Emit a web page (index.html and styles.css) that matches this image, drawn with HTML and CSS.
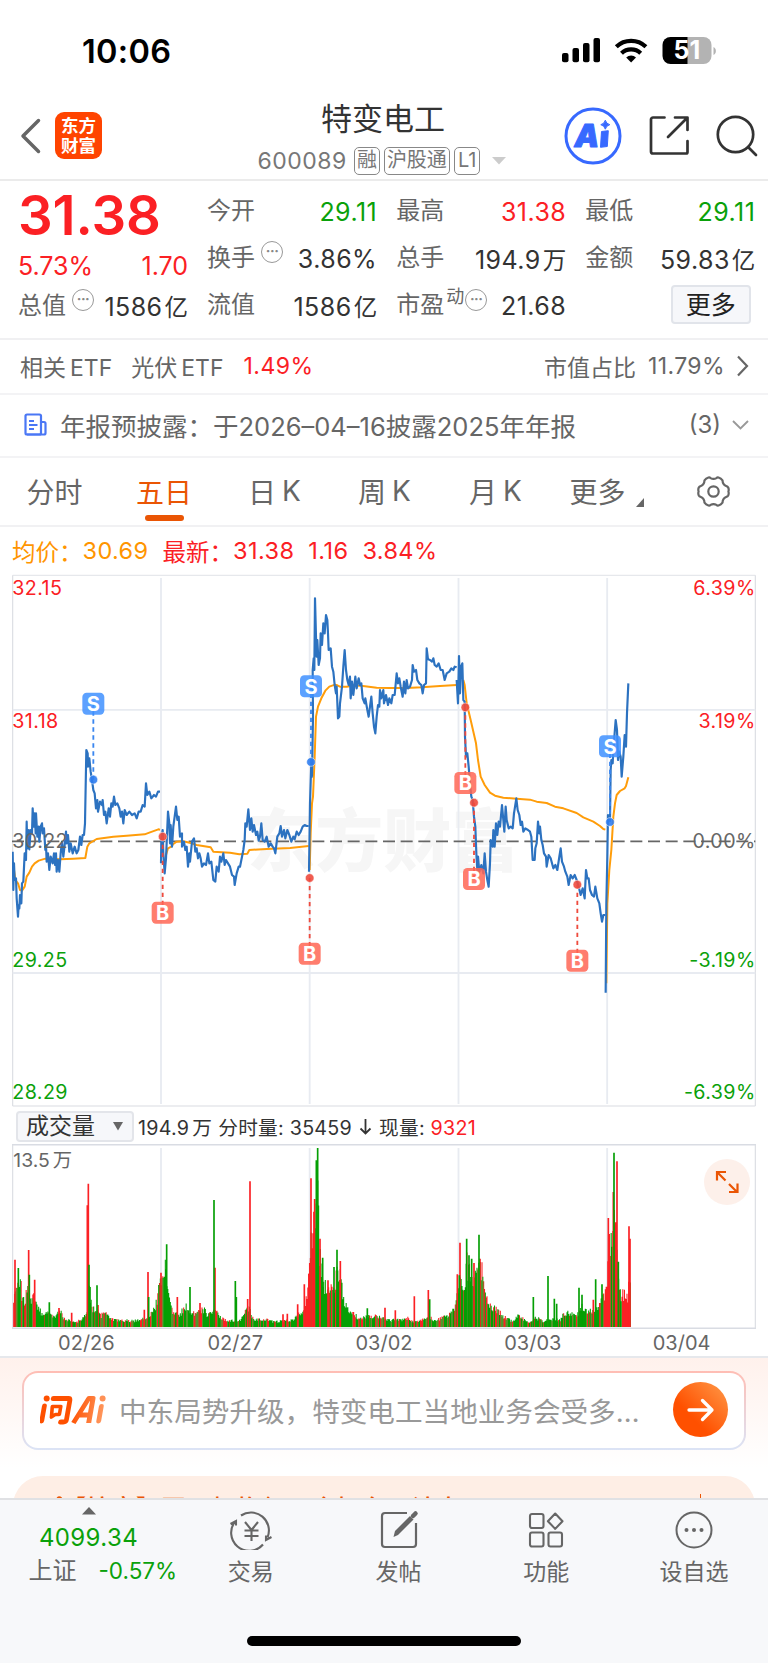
FILE: index.html
```html
<!DOCTYPE html>
<html lang="zh-CN">
<head>
    <meta charset="UTF-8">
    <meta name="viewport" content="width=device-width, initial-scale=1.0">
    <title>特变电工 600089</title>
    <link rel="stylesheet" href="styles.css">
</head>
<body>
<div class="app">

    <div class="status-bar">
        <span class="clock">10:06</span>
        <svg class="signal" width="156" height="28" viewBox="0 0 156 28">
            <rect x="0" y="16" width="6.5" height="9.3" rx="2"/>
            <rect x="10.500" y="11" width="6.5" height="14.3" rx="2"/>
            <rect x="21" y="6" width="6.5" height="19.3" rx="2"/>
            <rect x="31.500" y="1" width="6.5" height="24.3" rx="2"/>
            <g fill="none" stroke="#000" stroke-width="4.2">
                <path d="M54.300 9.700a21.500 21.500 0 0 1 29.600 0"/>
                <path d="M59.500 16.200a13.800 13.800 0 0 1 19.200 0"/>
            </g>
            <path d="M69.100 25.500l-4.900-5a7 7 0 0 1 9.800 0z"/>
            <path d="M108.500 0H127v27h-18.500a8 8 0 0 1-8-8V8a8 8 0 0 1 8-8z"/>
            <path d="M125.500 0h16a8 8 0 0 1 8 8v11a8 8 0 0 1-8 8h-16z" fill="#b3b3b3"/>
            <path d="M151.500 10v8c3.200-1.500 3.200-6.500 0-8z" fill="#b3b3b3"/>
            <text x="125" y="22" class="battery">51</text>
        </svg>
    </div>

    <div class="header">
        <div class="header-left">
            <svg width="22" height="36" viewBox="0 0 22 36"><path d="M19.500 2.500L4 18l15.500 15.500" fill="none" stroke="#666" stroke-width="3.500" stroke-linecap="round" stroke-linejoin="round"/></svg>
            <div class="logo">东方<br>财富</div>
        </div>
        <div class="header-title">
            <h1>特变电工</h1>
            <div class="code">
                <span class="num">600089</span>
                <span class="tag">融</span><span class="tag">沪股通</span><span class="tag">L1</span>
                <svg width="14" height="8" viewBox="0 0 14 8"><path d="M0 0h14L7 7.500z" fill="#ccc"/></svg>
            </div>
        </div>
        <div class="header-right">
            <svg width="58" height="58" viewBox="0 0 58 58">
                <circle cx="29" cy="29" r="27" fill="none" stroke="#3769ff" stroke-width="3"/>
                <g fill="#3769ff" stroke="#3769ff" stroke-linejoin="round">
                    <text x="10.500" y="40" class="ai-text">A</text>
                    <path d="M37.500 24.500l6.800-.8-1 15.800-6.800.8z"/>
                    <path d="M41.300 13.200q.9 3.600 4.500 4.500-3.600.9-4.500 4.500-.9-3.600-4.500-4.500 3.600-.9 4.500-4.500z"/>
                </g>
            </svg>
            <svg width="40" height="41" viewBox="0 0 40 41" fill="none" stroke="#333" stroke-width="2.700" stroke-linecap="round" stroke-linejoin="round">
                <path d="M15.500 2.500H4a2 2 0 0 0-2 2v32a2 2 0 0 0 2 2h33a1.500 1.500 0 0 0 1.500-1.500V26M26 2.500h12.500V15M38 3L19 22"/>
            </svg>
            <svg width="42" height="42" viewBox="0 0 42 42" fill="none" stroke="#333" stroke-width="2.700" stroke-linecap="round">
                <circle cx="19.500" cy="19.500" r="17.700"/>
                <path d="M32.300 32.300l7.700 7.700"/>
            </svg>
        </div>
    </div>

    <div class="quote">
        <div class="quote-col first">
            <div class="price">31.38</div>
            <div class="cell change red"><span class="num">5.73%</span><span class="num">1.70</span></div>
            <div class="cell cap"><label>总值<i class="more-dot">···</i></label><span>1586<b>亿</b></span></div>
        </div>
        <div class="quote-col">
            <div class="cell"><label>今开</label><span class="green">29.11</span></div>
            <div class="cell"><label>换手<i class="more-dot">···</i></label><span>3.86%</span></div>
            <div class="cell"><label>流值</label><span>1586<b>亿</b></span></div>
        </div>
        <div class="quote-col">
            <div class="cell"><label>最高</label><span class="red">31.38</span></div>
            <div class="cell"><label>总手</label><span>194.9<b>万</b></span></div>
            <div class="cell"><label>市盈<sup>动</sup><i class="more-dot tight">···</i></label><span>21.68</span></div>
        </div>
        <div class="quote-col">
            <div class="cell"><label>最低</label><span class="green">29.11</span></div>
            <div class="cell"><label>金额</label><span>59.83<b>亿</b></span></div>
            <div class="cell end"><button class="btn-more">更多</button></div>
        </div>
    </div>

    <div class="row etf">
        <span>相关<em>ETF</em></span>
        <span class="etf-name">光伏<em>ETF</em></span>
        <span class="red rate">1.49%</span>
        <span class="push">市值占比</span>
        <span class="ratio">11.79%</span>
        <svg width="14" height="22" viewBox="0 0 14 22"><path d="M3 1.500l9 9.500-9 9.500" fill="none" stroke="#666" stroke-width="2.200"/></svg>
    </div>

    <div class="row notice">
        <svg width="23" height="23" viewBox="0 0 23 23" fill="none" stroke="#4a77f5" stroke-width="2.200">
            <rect x="1.500" y="1.500" width="15.500" height="20" rx="1.500"/>
            <path d="M17 9h3a1.500 1.500 0 0 1 1.500 1.500V20a1.500 1.500 0 0 1-1.500 1.500H3M5 8h5M5 12h8.500M5 16h5"/>
        </svg>
        <span class="notice-text">年报预披露：于2026–04–16披露2025年年报</span>
        <span class="push">(3)</span>
        <svg width="17" height="10" viewBox="0 0 17 10"><path d="M1 1l7.500 7.500L16 1" fill="none" stroke="#999" stroke-width="1.900"/></svg>
    </div>

    <div class="tabs">
        <div class="tab">分时</div>
        <div class="tab active">五日</div>
        <div class="tab">日<em>K</em></div>
        <div class="tab">周<em>K</em></div>
        <div class="tab">月<em>K</em></div>
        <div class="tab">更多<svg width="8" height="9" viewBox="0 0 8 9"><path d="M8 0v9H0z" fill="#666"/></svg></div>
        <div class="tab gear">
            <svg width="33" height="31" viewBox="0 0 33 31" fill="none" stroke="#666" stroke-width="2.200">
                <path d="M11.500 1.500q1.200-.3 2 .6 3 1.600 6 0 .8-.9 2-.6 2.600.9 4 2.800.2 4.400 3.600 5.700 1.600.6 2.100 1.500.9 2 .2 4 .7 2-.2 4-.5.900-2.100 1.500-3.400 1.300-3.600 5.700-1.400 1.900-4 2.800-1.200.3-2-.6-3-1.600-6 0-.8.9-2 .6-2.600-.9-4-2.800-.2-4.400-3.600-5.700-1.600-.6-2.100-1.500-.9-2-.2-4-.7-2 .2-4 .5-.9 2.100-1.500 3.400-1.300 3.600-5.700 1.400-1.900 4-2.800z" stroke-linejoin="round"/>
                <circle cx="16.500" cy="15.500" r="5.200"/>
            </svg>
        </div>
    </div>

    <div class="legend">
        <span class="orange">均价：</span><span class="orange num">30.69</span>
        <span class="red latest">最新：</span><span class="red num">31.38</span><span class="red num">1.16</span><span class="red num">3.84%</span>
    </div>

    <!-- 五日分时走势 -->
    <svg class="chart" width="744" height="533" viewBox="36 12 2232 1599">
        <text x="742" y="888" class="watermark">东方财富</text>
        <g fill="none" stroke="#e8ebf1">
            <path d="M38 16H2266M38 1608H2266" stroke-width="4" stroke="#e6e8ec"/>
            <path d="M38 16V1608M2266 16V1608" stroke-width="3.500" stroke="#dcdee3"/>
            <path d="M483 24V1602M929 24V1602M1375.500 24V1602M1821.500 24V1602M38 419.500H2266M38 1209H2266" stroke-width="5.500"/>
        </g>
        <path d="M36 814H2266" stroke="#666" stroke-width="5.500" stroke-dasharray="36 17"/>

        <g class="avg-line">
            <polyline points="40,885 46,930 54,940 60,960 66,962 74,950 80,920 88,908 96,890 104,880 116,872 136,866 180,868 220,866 256,864 262,830 268,820 290,807 340,800 380,797 434,793 450,787 475,778 480,779"/>
            <polyline points="494,880 498,855 504,835 514,830 520,822 530,815 550,814 575,820 590,825 632,832 640,845 690,848 718,853 742,851 748,840 800,837 870,834 926,828"/>
            <polyline transform="translate(720)" points="209,900 212,790 216,700 219,680 224,560 228,440 234,410 244,385 256,362 268,350 285,344 292,346 300,350 320,350 345,346 375,349 410,353 450,354 500,354 545,352 600,348 650,345"/>
            <polyline transform="translate(1320)" points="70,330 74,345 80,400 92,450 108,520 114,570 122,620 134,645 150,668 165,677 190,683 230,686 270,689 290,695 320,699 345,710 370,715 410,729 430,742 460,755 480,768 490,777 496,779"/>
            <polyline transform="translate(1320)" points="499,1240 502,1000 508,900 514,840 520,740 525,700 530,675 540,663 554,655 558,648 565,622"/>
        </g>

        <g class="price-line">
            <polyline points="38,845 40,960 42,880 44,930 48,925 50,985 54,1040 56,1005 58,1015 60,975 64,1000 66,940 70,935 74,850 78,870 80,755 82,835 86,780 88,838 92,780 96,790 98,715 101,770 104,730 107,790 108,730 112,800 116,770 118,815 122,770 126,760 128,790 132,775 136,840 138,825 140,875 144,850 148,900 152,860 158,880 162,850 165,885 168,850 170,905 174,870 178,905 182,850 186,815 190,860 194,825 198,785 200,820 204,795 208,845 212,820 218,850 224,830 230,850 235,840 240,800 244,825 248,795 252,795 255,760 259,540 263,550 264,590 268,565 272,605 276,630 280,660 284,670 288,715 292,690 294,725 300,695 306,705 308,690 312,735 316,725 320,760 326,715 330,740 334,700 338,710 342,680 346,705 352,700 358,715 362,740 366,725 370,760 374,720 380,735 388,725 396,735 404,730 410,745 416,725 422,725 428,705 434,710 438,640 442,675 448,665 454,685 462,675 468,680 474,665 480,665"/>
            <polyline points="483,880 484,810 488,780 490,850 494,910 498,865 504,725 508,760 510,820 512,765 516,830 520,770 524,740 528,710 532,750 536,740 540,800 546,790 546,830 552,815 556,840 560,830 564,890 568,850 570,875 576,815 582,805 586,845 590,835 594,865 598,850 602,865 606,890 612,880 618,885 624,850 628,880 634,875 640,930 646,935 650,890 656,905 660,860 664,875 670,850 674,885 678,870 684,880 690,890 696,915 702,920 704,945 710,910 716,890 720,890 726,860 730,840 734,810 736,760 740,770 745,718 750,780 754,745 758,785 762,765 768,795 772,785 776,812 780,800 784,760 788,810 794,815 800,800 806,830 812,820 818,830 822,835 826,850 832,800 838,790 842,768 846,800 852,780 856,805 862,780 868,795 874,815 880,800 884,808 890,785 896,795 902,785 908,770 914,765 920,768 926,768"/>
            <polyline transform="translate(720)" points="207,905 210,700 214,575 216,620 219,440 218,300 221,265 223,300 225,85 228,200 230,260 232,210 236,285 240,265 242,190 246,225 250,160 254,190 258,135 262,150 264,190 266,240 272,235 276,290 280,305 284,345 288,370 290,350 294,445 298,440 300,400 306,350 310,290 314,240 318,300 322,330 326,345 330,320 332,385 336,335 340,375 346,320 350,355 356,325 360,345 364,340 368,385 374,400 376,385 382,420 386,440 390,410 394,380 398,430 402,470 406,490 410,440 414,405 418,410 420,360 424,385 430,360 432,400 438,375 444,405 448,385 454,400 458,375 464,375 470,310 474,340 478,325 482,350 488,380 492,335 496,370 500,330 504,355 510,350 516,330 518,285 522,305 528,300 532,330 538,340 544,345 548,370 552,345 558,340 560,235 564,268 570,270 576,275 580,265 584,285 590,290 596,280 602,300 608,300 614,330 620,310 628,305 634,295 640,300 644,290 650,292"/>
            <polyline transform="translate(1320)" points="50,330 54,400 57,258 60,370 63,290 67,280 70,390 74,395 75,500 78,560 82,550 86,590 90,640 94,680 98,690 102,740 106,770 109,850 112,900 114,860 118,905 124,885 130,910 134,850 138,905 142,930 146,950 150,880 152,810 158,830 160,780 164,830 168,760 172,795 176,755 180,770 186,705 190,750 193,785 197,710 200,750 206,775 212,770 218,775 222,730 229,685 233,720 238,735 242,765 246,755 250,785 256,775 264,780 270,785 274,800 278,870 284,870 286,835 290,820 294,755 298,790 300,770 304,810 308,825 312,850 318,860 320,890 326,855 332,865 340,895 346,885 352,900 358,860 362,835 366,875 372,890 376,905 382,920 386,945 392,915 398,925 404,915 410,930 416,950 422,975 428,955 434,985 438,900 442,925 446,925 450,960 456,975 462,980 466,950 472,985 478,1000 482,1030 486,1055 490,1035 496,1035"/>
            <polyline transform="translate(1320)" points="497,1268 499,1000 502,860 504,735 510,750 512,600 514,570 518,580 520,540 527,450 531,480 534,570 538,545 542,560 545,620 550,560 554,495 558,530 561,430 565,340"/>
        </g>

        <g id="markers"></g>

        <g class="axis">
            <text x="37" y="75" fill="#fb2024">32.15</text>
            <text x="37" y="473" fill="#fb2024">31.18</text>
            <text x="37" y="833" fill="#666">30.22</text>
            <text x="37" y="1191" fill="#0aa10a">29.25</text>
            <text x="37" y="1588" fill="#0aa10a">28.29</text>
            <g text-anchor="end">
                <text x="2267" y="75" fill="#fb2024">6.39%</text>
                <text x="2267" y="473" fill="#fb2024">3.19%</text>
                <text x="2267" y="833" fill="#666">0.00%</text>
                <text x="2267" y="1191" fill="#0aa10a">-3.19%</text>
                <text x="2267" y="1588" fill="#0aa10a">-6.39%</text>
            </g>
        </g>
    </svg>

    <div class="vol-head">
        <div class="select">成交量<svg width="10" height="9" viewBox="0 0 10 9"><path d="M0 0h10L5 8.500z" fill="#666"/></svg></div>
        <span>194.9<b>万</b></span>
        <span>分时量: 35459</span>
        <svg width="13" height="17" viewBox="0 0 13 17"><path d="M6.500 1v14M1.500 10.500l5 5 5-5" fill="none" stroke="#333" stroke-width="1.800"/></svg>
        <span>现量: <span class="red">9321</span></span>
    </div>

    <div class="vol-wrap">
        <svg class="chart" width="744" height="186" viewBox="36 552 2232 558">
            <path d="M483 564V1102M929 564V1102M1375.500 564V1102M1821.500 564V1102" stroke="#e8ebf1" stroke-width="5.500"/>
            <path d="M36 554H2268M36 1104.500H2268" stroke="#d9dce3" stroke-width="4.500"/>
            <path d="M38 554V1104M2266 554V1104" stroke="#dcdee3" stroke-width="3.500"/>
            <path id="volRed" stroke="#fb2024" stroke-width="3.200"/>
            <path id="volGreen" stroke="#049f04" stroke-width="3.200"/>
            <path id="peakRed" stroke="#fb2024" stroke-width="5"/>
            <path id="peakGreen" stroke="#049f04" stroke-width="5"/>
            <text x="40" y="621" class="vol-max">13.5<tspan dx="9">万</tspan></text>
        </svg>
        <div class="expand">
            <svg width="24" height="24" viewBox="0 0 24 24" fill="none" stroke="#ea5504" stroke-width="2.200"><path d="M2 10.500V2h9M2.500 2.500l8 8M14 14l8 8M22.500 13.500V22H14"/></svg>
        </div>
    </div>

    <div class="dates"><span>02/26</span><span>02/27</span><span>03/02</span><span>03/03</span><span>03/04</span></div>

    <div class="ask">
        <div class="ask-box">
            <svg width="66" height="32" viewBox="0 0 66 32">
                <defs>
                    <linearGradient id="askFill" gradientUnits="userSpaceOnUse" x1="0" x2="68" y1="0" y2="0"><stop offset=".5" stop-color="#fe5000"/><stop offset="1" stop-color="#ff9a61"/></linearGradient>
                </defs>
                <g transform="skewX(-10)" fill="none" stroke="url(#askFill)" stroke-width="4.800" stroke-linecap="round" stroke-linejoin="round">
                    <path d="M6.500 12V27M14 4.500h15q2 0 2 2.500v19q0 2-2.500 2h-3"/>
                    <path d="M14.500 12.500h8.500v8h-4l-3.500 2.500z" stroke-width="3.600"/>
                    <path d="M38.500 29L49.500 4.500h4.300V29M43 21h11" stroke-linecap="butt" stroke-width="5"/>
                    <path d="M63.500 12.500V27"/>
                </g>
                <circle cx="6.700" cy="4.400" r="3" fill="#fe5000"/>
                <circle cx="62.600" cy="4.400" r="3" fill="#ff9156"/>
            </svg>
            <span class="ask-text">中东局势升级，特变电工当地业务会受多…</span>
            <div class="ask-go">
                <svg width="28" height="24" viewBox="0 0 28 24"><path d="M2 12h23M15.500 2.500L25 12l-9.500 9.500" fill="none" stroke="#fff" stroke-width="3.300" stroke-linecap="round" stroke-linejoin="round"/></svg>
            </div>
        </div>
        <div class="promo"><i></i><span>【按章】国网机构领现金担东，计大</span><u></u></div>
    </div>

    <div class="bottom">
        <div class="nav">
            <div class="index">
                <svg width="14" height="8" viewBox="0 0 14 8"><path d="M0 7.500h14L7 0z" fill="#666"/></svg>
                <span class="index-value">4099.34</span>
                <div class="index-row"><label>上证</label><span>-0.57%</span></div>
            </div>
            <div class="nav-item">
                <svg width="44" height="40" viewBox="0 0 44 40" fill="none" stroke="#666" stroke-width="2.100">
                    <path d="M12 5.500A18 18 0 0 1 38.500 27.500M42.500 27l-5.500 3v-4.500M34 34.500A18 18 0 0 1 6.500 11M1.500 14l5.500-3v4.500"/>
                    <path d="M16 12l6.500 8 6.500-8M22.500 20v11M15.500 20.500h14M15.500 26h14"/>
                </svg>
                <span>交易</span>
            </div>
            <div class="nav-item">
                <svg width="40" height="40" viewBox="0 0 40 40" fill="none" stroke="#666" stroke-width="2.200">
                    <path d="M28 3H6a3 3 0 0 0-3 3v28a3 3 0 0 0 3 3h28a3 3 0 0 0 3-3V13"/>
                    <path d="M14.500 27l1.500-6L31 6l3.500 3.500L19 25z" fill="#666" stroke="none"/><path d="M34 6l2.500-2.500" stroke-width="4.500" stroke-linecap="round"/>
                </svg>
                <span>发帖</span>
            </div>
            <div class="nav-item">
                <svg width="40" height="40" viewBox="0 0 40 40" fill="none" stroke="#666" stroke-width="2.100">
                    <rect x="4" y="4" width="13.500" height="14" rx="2"/>
                    <rect x="4" y="22.500" width="13.500" height="14" rx="2"/>
                    <rect x="22.500" y="22.500" width="13.500" height="14" rx="2"/>
                    <path d="M29.200 3.500l7.300 7.700-7.300 7.700-7.300-7.700z" stroke-linejoin="round"/>
                </svg>
                <span>功能</span>
            </div>
            <div class="nav-item">
                <svg width="40" height="40" viewBox="0 0 40 40" fill="none" stroke="#666" stroke-width="2">
                    <circle cx="20" cy="20" r="17.500"/>
                    <g fill="#666" stroke="none"><circle cx="12.500" cy="20" r="2"/><circle cx="20" cy="20" r="2"/><circle cx="27.500" cy="20" r="2"/></g>
                </svg>
                <span>设自选</span>
            </div>
        </div>
        <div class="home-bar"></div>
    </div>

</div>
<script src="chart.js"></script>
</body>
</html>
```

FILE: styles.css
```css
* {
    box-sizing: border-box;
}

body {
    margin: 0;
    background: #fff;
    color: #333;
    font-family: Inter, "Noto Sans CJK SC", sans-serif;
}

i, em, b {
    font-style: normal;
    font-weight: 400;
}

svg {
    display: block;
    flex: none;
}

.app {
    width: 768px;
    height: 1663px;
    overflow: hidden;
    display: flex;
    flex-direction: column;
}

.app > div {
    flex: none;
}

.red { color: #fb2024; }
.green { color: #0aa10a; }
.orange { color: #ff9500; }

/* 状态栏 */
.status-bar {
    height: 92px;
    padding: 37px 50px 0 82px;
    display: flex;
    justify-content: space-between;
    align-items: flex-start;
}

.clock {
    font-size: 32.500px;
    font-weight: 600;
    line-height: 30px;
    letter-spacing: 0.3px;
    color: #000;
}

.battery {
    font-size: 25px;
    font-weight: 700;
    fill: #fff;
    text-anchor: middle;
}

/* 标题 */
.header {
    height: 89px;
    padding: 0 10px 0 19px;
    display: grid;
    grid-template-columns: 210px 1fr 195px;
    border-bottom: 2px solid #ebebeb;
}

.header-left {
    display: flex;
    align-items: center;
    gap: 14px;
}

.logo {
    width: 47px;
    height: 47px;
    border-radius: 9px;
    background: #ff4400;
    color: #fff;
    font-size: 17.500px;
    font-weight: 700;
    line-height: 19.500px;
    text-align: center;
    padding-top: 4px;
}

.header-title {
    display: flex;
    flex-direction: column;
    align-items: center;
    padding-top: 9px;
}

h1 {
    margin: 0;
    font-size: 31px;
    font-weight: 400;
    line-height: 36px;
    padding-right: 26px;
}

.code {
    display: flex;
    align-items: center;
    color: #777;
    font-size: 23px;
    height: 30px;
    margin: 9px 0 0 -28px;
}

.code .num {
    margin-right: 7px;
    letter-spacing: 0.500px;
}

.tag {
    border: 1.5px solid #888;
    border-radius: 5px;
    height: 28px;
    line-height: 25px;
    font-size: 20px;
    padding: 0 2px;
    margin-right: 4px;
}

.tag:nth-of-type(4) {
    padding: 0 3px;
}

.code svg {
    margin-left: 8px;
}

.header-right {
    display: flex;
    align-items: center;
    justify-content: flex-end;
    gap: 27px;
}

.ai-text {
    font-size: 31px;
    font-weight: 900;
    font-style: italic;
}

/* 行情 */
.quote {
    height: 159px;
    padding: 7px 13px 0 18px;
    display: grid;
    grid-template-columns: repeat(4, 169.600px);
    column-gap: 19.500px;
    border-bottom: 2px solid #f0f0f2;
}

.price {
    font-size: 54.500px;
    font-weight: 600;
    line-height: 54px;
    height: 54px;
    color: #fb2024;
    letter-spacing: -0.1px;
}

.cell {
    height: 47px;
    display: flex;
    align-items: center;
    justify-content: space-between;
    font-size: 25px;
    letter-spacing: 0.45px;
    white-space: nowrap;
}

.cell > span {
    margin-right: -0.45px;
}

.cell label {
    font-size: 24px;
    letter-spacing: 0;
    line-height: 34px;
    color: #666;
    display: flex;
    align-items: center;
    padding-bottom: 1px;
}

.cell b {
    font-size: 23.500px;
    letter-spacing: 0;
    margin-left: 2px;
}

.first .change {
    height: 48px;
    letter-spacing: 0;
}

.first .cap {
    height: 32px;
}

.more-dot {
    width: 22px;
    height: 22px;
    border: 1.700px solid #999;
    border-radius: 50%;
    font-size: 14px;
    font-weight: 700;
    line-height: 18px;
    text-align: center;
    color: #888;
    margin: -12px 0 0 6px;
    letter-spacing: -0.5px;
}

.more-dot.tight {
    margin: -10px 0 0 1px;
}

.cell sup {
    font-size: 18px;
    line-height: 18px;
    margin: -16px 0 0 2px;
}

.cell.end {
    justify-content: flex-end;
    padding-right: 4px;
}

.btn-more {
    width: 80px;
    height: 39px;
    margin-top: -2px;
    padding: 0;
    border: 2px solid #e1e4ea;
    border-radius: 4px;
    background: #f6f7fa;
    color: #222;
    font: inherit;
    letter-spacing: 0;
    line-height: 30px;
}

/* ETF、公告 */
.row {
    display: flex;
    align-items: center;
    color: #666;
    padding: 0 19px 2px 20px;
    border-bottom: 2px solid #f3f3f5;
    white-space: nowrap;
}

.row .push {
    margin-left: auto;
}

.row em {
    margin-left: 4px;
}

.etf {
    height: 55px;
    font-size: 23px;
}

.etf-name {
    margin: 0 20px 0 19px;
}

.rate {
    letter-spacing: 0.5px;
}

.ratio {
    margin: 0 10px 0 12px;
    letter-spacing: 0.4px;
}

.notice {
    height: 63px;
    font-size: 24.500px;
    padding-left: 24px;
}

.notice-text {
    margin-left: 13px;
    font-size: 25.500px;
}

.notice .push {
    font-size: 24px;
    margin-right: 11px;
}

/* 周期 */
.tabs {
    height: 69px;
    display: grid;
    grid-template-columns: 109px 110px 111px 109px 113px 107px 1fr;
    border-bottom: 2px solid #f1f1f3;
    color: #666;
    font-size: 28px;
}

.tab {
    position: relative;
    display: flex;
    align-items: center;
    justify-content: center;
    padding-bottom: 2px;
}

.tab em {
    margin-left: 6px;
}

.tab svg {
    margin: 24px 0 0 10px;
}

.tab:nth-child(6) {
    padding-left: 2px;
}

.active {
    color: #ea5504;
}

.active::after {
    content: "";
    position: absolute;
    bottom: 4px;
    width: 39px;
    height: 6px;
    border-radius: 3px;
    background: #ea5504;
}

.tab.gear {
    padding: 0;
}

.gear svg {
    margin: 0;
}

.legend {
    height: 47px;
    padding: 0 0 0 12px;
    display: flex;
    align-items: center;
    gap: 14px;
    font-size: 23.500px;
    white-space: nowrap;
}

.legend span:nth-child(odd):not(.num) {
    margin-right: -14px;
}

.legend .num {
    letter-spacing: 0.4px;
}

/* 走势图 */
.chart {
    margin-left: 12px;
}

.watermark {
    font-family: "Noto Sans CJK SC", sans-serif;
    font-size: 204px;
    font-weight: 900;
    fill: #f6f6f6;
}

.price-line, .avg-line {
    fill: none;
    stroke: #2c72c0;
    stroke-width: 6.500;
    stroke-linejoin: round;
}

.avg-line {
    stroke: #ff9d0a;
    stroke-width: 6;
}

.axis {
    font-size: 59px;
    letter-spacing: 1.2px;
}

.marker-text {
    font-size: 60px;
    font-weight: 700;
    fill: #fff;
    text-anchor: middle;
}

.vol-head {
    height: 37px;
    padding: 3px 0 2px 16px;
    display: flex;
    align-items: center;
    font-size: 19.700px;
    letter-spacing: 0.25px;
    gap: 6px;
    white-space: nowrap;
}

.vol-head b {
    margin-left: 3px;
}

.vol-head > svg {
    margin: 0 1px;
}

.select {
    width: 118px;
    height: 31px;
    padding: 0 9px 0 8px;
    margin-right: -2px;
    border: 2px solid #e3e5ea;
    border-radius: 4px;
    background: #f6f7fa;
    display: flex;
    align-items: center;
    justify-content: space-between;
    font-size: 23px;
    letter-spacing: 0;
    line-height: 28px;
}

.vol-wrap {
    position: relative;
}

.vol-max {
    font-size: 58px;
    fill: #666;
}

.expand {
    position: absolute;
    left: 704px;
    top: 15px;
    width: 46px;
    height: 46px;
    border-radius: 50%;
    background: #fdf0ea;
    display: flex;
    align-items: center;
    justify-content: center;
}

.dates {
    height: 26px;
    padding: 0 12px;
    display: grid;
    grid-template-columns: repeat(5, 1fr);
    text-align: center;
    font-size: 20px;
    line-height: 26px;
    color: #666;
}

/* 问Ai */
.ask {
    height: 142px;
    overflow: hidden;
    padding: 13px 22px 0;
    border-top: 2px solid #e6e8ec;
    background: linear-gradient(#fff1ec, #fff 110px);
}

.ask-box {
    height: 79px;
    border: 2px solid transparent;
    border-radius: 16px;
    background: linear-gradient(#fff, #fff) padding-box, linear-gradient(#ffbdb4, #dbe4f6) border-box;
    padding: 0 16px 2px;
    display: flex;
    align-items: center;
}

.ask-text {
    margin-left: 13px;
    font-size: 27.600px;
    color: #999;
    white-space: nowrap;
}

.ask-go {
    margin-left: auto;
    width: 55px;
    height: 55px;
    border-radius: 50%;
    background: linear-gradient(45deg, #ff5000 35%, #ff9b4a);
    display: flex;
    align-items: center;
    justify-content: center;
}

.promo {
    height: 60px;
    margin: 26px -9px 0;
    padding: 19px 54px 0 42px;
    border-radius: 30px;
    background: #feeee5;
    color: #ea5504;
    display: flex;
    align-items: flex-start;
    font-size: 25px;
    font-weight: 500;
    line-height: 28px;
    white-space: nowrap;
}

.promo i {
    width: 6px;
    height: 12px;
    margin-top: 1px;
    border-radius: 3px;
    background: #ea5504;
    transform: rotate(25deg);
}

.promo u {
    margin: -1px 0 0 auto;
    width: 1.5px;
    height: 20px;
    background: #ea5504;
}

/* 底部 */
.bottom {
    height: 165px;
    background: #f7f8fa;
    border-top: 2px solid #e0e1e4;
    display: flex;
    flex-direction: column;
    align-items: center;
}

.nav {
    width: 768px;
    height: 136px;
    display: grid;
    grid-template-columns: 177px repeat(4, 147.700px);
}

.index {
    display: flex;
    flex-direction: column;
    align-items: center;
    padding-top: 7px;
    color: #0aa10a;
    font-size: 24px;
}

.index-value {
    line-height: 30px;
    margin-top: 8px;
    letter-spacing: 0.4px;
}

.index-row {
    display: flex;
    gap: 22px;
    align-items: center;
    font-size: 22.500px;
    line-height: 34px;
    margin: 1px 0 0 28px;
    width: 148px;
    white-space: nowrap;
}

.index-row label {
    font-size: 24px;
    color: #666;
}

.nav-item {
    display: flex;
    flex-direction: column;
    align-items: center;
    padding-top: 10px;
    font-size: 23px;
    color: #666;
}

.nav-item span {
    line-height: 34px;
    margin-top: 5px;
}

.home-bar {
    width: 274px;
    height: 10px;
    border-radius: 5px;
    background: #000;
}
```

FILE: chart.js
```javascript
// 买卖点: [类型, 横坐标, 圆点纵坐标, 标签纵坐标]
const marks = [
    ['S', 280, 629, 401],
    ['B', 488, 800, 1028],
    ['S', 933, 576, 349],
    ['B', 929, 924, 1151],
    ['B', 1396, 412, 639],
    ['B', 1422, 698, 927],
    ['B', 1732, 944, 1172],
    ['S', 1830, 756, 529]
];

document.getElementById('markers').innerHTML = marks.map(([type, x, dot, tag]) => {
    const sell = type === 'S';
    const box = sell ? '#3f90ff' : '#ff6655';
    const line = sell ? '#3a86f0' : '#ee4b3e';
    return `<path d="M${x} ${dot}V${tag}" stroke="${line}" stroke-width="5.5" stroke-dasharray="13 11"/>
        <circle cx="${x}" cy="${dot}" r="13" fill="${sell ? '#2f7df0' : '#ee4b3e'}" fill-opacity=".9" stroke="#fff" stroke-opacity=".5" stroke-width="3"/>
        <rect x="${x - 33}" y="${tag - 33}" width="66" height="66" rx="13" fill="${box}" fill-opacity=".85"/>
        <text class="marker-text" x="${x}" y="${tag + 22}">${type}</text>`;
}).join('');

// 成交量轮廓: 横坐标, 高度
const base = 1101;
const outline = [
    40, 60, 46, 110, 55, 165, 62, 130, 68, 80, 76, 75, 84, 150, 90, 90, 104, 90, 110, 60, 125, 42, 135, 40, 148, 60,
    156, 35, 165, 25, 180, 50, 190, 25, 210, 22, 230, 14, 245, 25, 258, 36, 268, 110, 275, 60, 290, 50, 300, 35,
    318, 40, 340, 22, 375, 20, 400, 18, 425, 25, 440, 25, 455, 40, 465, 55, 472, 90, 482, 130, 490, 160, 498, 200,
    505, 90, 515, 50, 530, 45, 540, 35, 555, 65, 570, 45, 590, 40, 613, 55, 620, 35, 640, 50, 650, 55, 655, 35,
    680, 18, 720, 20, 740, 60, 750, 50, 760, 22, 800, 22, 820, 16, 850, 18, 880, 22, 900, 40, 915, 60, 925, 120,
    932, 280, 940, 310, 947, 400, 953, 450, 958, 220, 965, 170, 975, 120, 985, 100, 1000, 120, 1010, 165, 1020, 160,
    1030, 80, 1050, 45, 1080, 25, 1110, 35, 1130, 35, 1150, 25, 1170, 20, 1200, 22, 1225, 28, 1240, 15, 1260, 20,
    1290, 30, 1300, 18, 1320, 25, 1345, 35, 1360, 55, 1370, 80, 1378, 130, 1390, 110, 1400, 190, 1410, 160,
    1422, 150, 1432, 160, 1440, 200, 1446, 170, 1452, 110, 1465, 80, 1485, 55, 1500, 45, 1520, 25, 1540, 18,
    1555, 35, 1570, 25, 1590, 12, 1605, 30, 1630, 18, 1650, 25, 1680, 20, 1695, 45, 1730, 35, 1745, 60, 1760, 45,
    1780, 50, 1800, 70, 1815, 90, 1820, 140, 1828, 270, 1835, 290, 1842, 320, 1850, 210, 1856, 160, 1860, 100,
    1875, 100, 1883, 90, 1887, 130, 1891, 130
];

// 放量柱: 横坐标, 高度, 颜色
const peaks = [
    [45, 202, 'r'], [55, 177, 'g'], [86, 231, 'r'], [88, 157, 'g'], [104, 142, 'r'], [148, 74, 'g'], [177, 57, 'r'],
    [215, 43, 'r'], [262, 365, 'r'], [265, 430, 'r'], [267, 187, 'g'], [270, 120, 'g'], [291, 125, 'g'], [294, 66, 'r'],
    [433, 52, 'r'], [444, 165, 'r'], [446, 90, 'g'], [483, 163, 'r'], [500, 248, 'g'], [532, 90, 'r'], [570, 120, 'g'],
    [600, 72, 'r'], [642, 381, 'g'], [645, 178, 'r'], [706, 138, 'g'], [709, 90, 'g'], [743, 84, 'r'], [750, 437, 'r'],
    [849, 38, 'r'], [862, 40, 'r'], [893, 68, 'r'], [913, 128, 'r'], [927, 160, 'r'], [933, 446, 'r'], [944, 384, 'r'],
    [949, 500, 'g'], [953, 537, 'g'], [960, 265, 'r'], [968, 208, 'g'], [984, 140, 'r'], [1002, 180, 'g'],
    [1011, 232, 'g'], [1021, 198, 'r'], [1102, 56, 'g'], [1155, 58, 'r'], [1186, 50, 'r'], [1243, 92, 'r'],
    [1285, 111, 'r'], [1289, 83, 'g'], [1372, 158, 'r'], [1378, 155, 'g'], [1380, 253, 'r'], [1400, 265, 'g'],
    [1407, 215, 'g'], [1415, 205, 'g'], [1422, 192, 'r'], [1437, 277, 'g'], [1440, 205, 'r'], [1600, 90, 'g'],
    [1644, 153, 'g'], [1663, 85, 'g'], [1670, 70, 'g'], [1737, 118, 'g'], [1746, 97, 'g'], [1780, 82, 'r'],
    [1787, 143, 'g'], [1806, 128, 'g'], [1825, 327, 'r'], [1840, 405, 'r'], [1842, 523, 'g'], [1846, 314, 'r'],
    [1851, 497, 'r'], [1855, 196, 'g'], [1887, 302, 'r'], [1890, 265, 'r']
];

let seed = 89;
function rand() {
    seed = (seed * 16807) % 2147483647;
    return seed / 2147483647;
}

const bars = { r: '', g: '' };
const tall = { r: '', g: '' };
let k = 0;
for (let x = 41; x < 1892; x += 2.5) {
    while (k + 4 < outline.length && outline[k + 2] < x) k += 2;
    const t = (x - outline[k]) / (outline[k + 2] - outline[k]);
    const level = outline[k + 1] + (outline[k + 3] - outline[k + 1]) * t;
    const rush = (x > 915 && x < 945) || (x > 1808 && x < 1832) || x > 1858;
    const color = rand() < (rush ? 0.8 : 0.3) ? 'r' : 'g';
    const h = level * (0.75 + rand() * 0.45);
    bars[color] += `M${x} ${base}v${-h.toFixed(1)}`;
}
peaks.forEach(([x, h, color]) => {
    tall[color] += `M${x} ${base}v${-h}`;
});
document.getElementById('volRed').setAttribute('d', bars.r);
document.getElementById('volGreen').setAttribute('d', bars.g);
document.getElementById('peakRed').setAttribute('d', tall.r);
document.getElementById('peakGreen').setAttribute('d', tall.g);
```
